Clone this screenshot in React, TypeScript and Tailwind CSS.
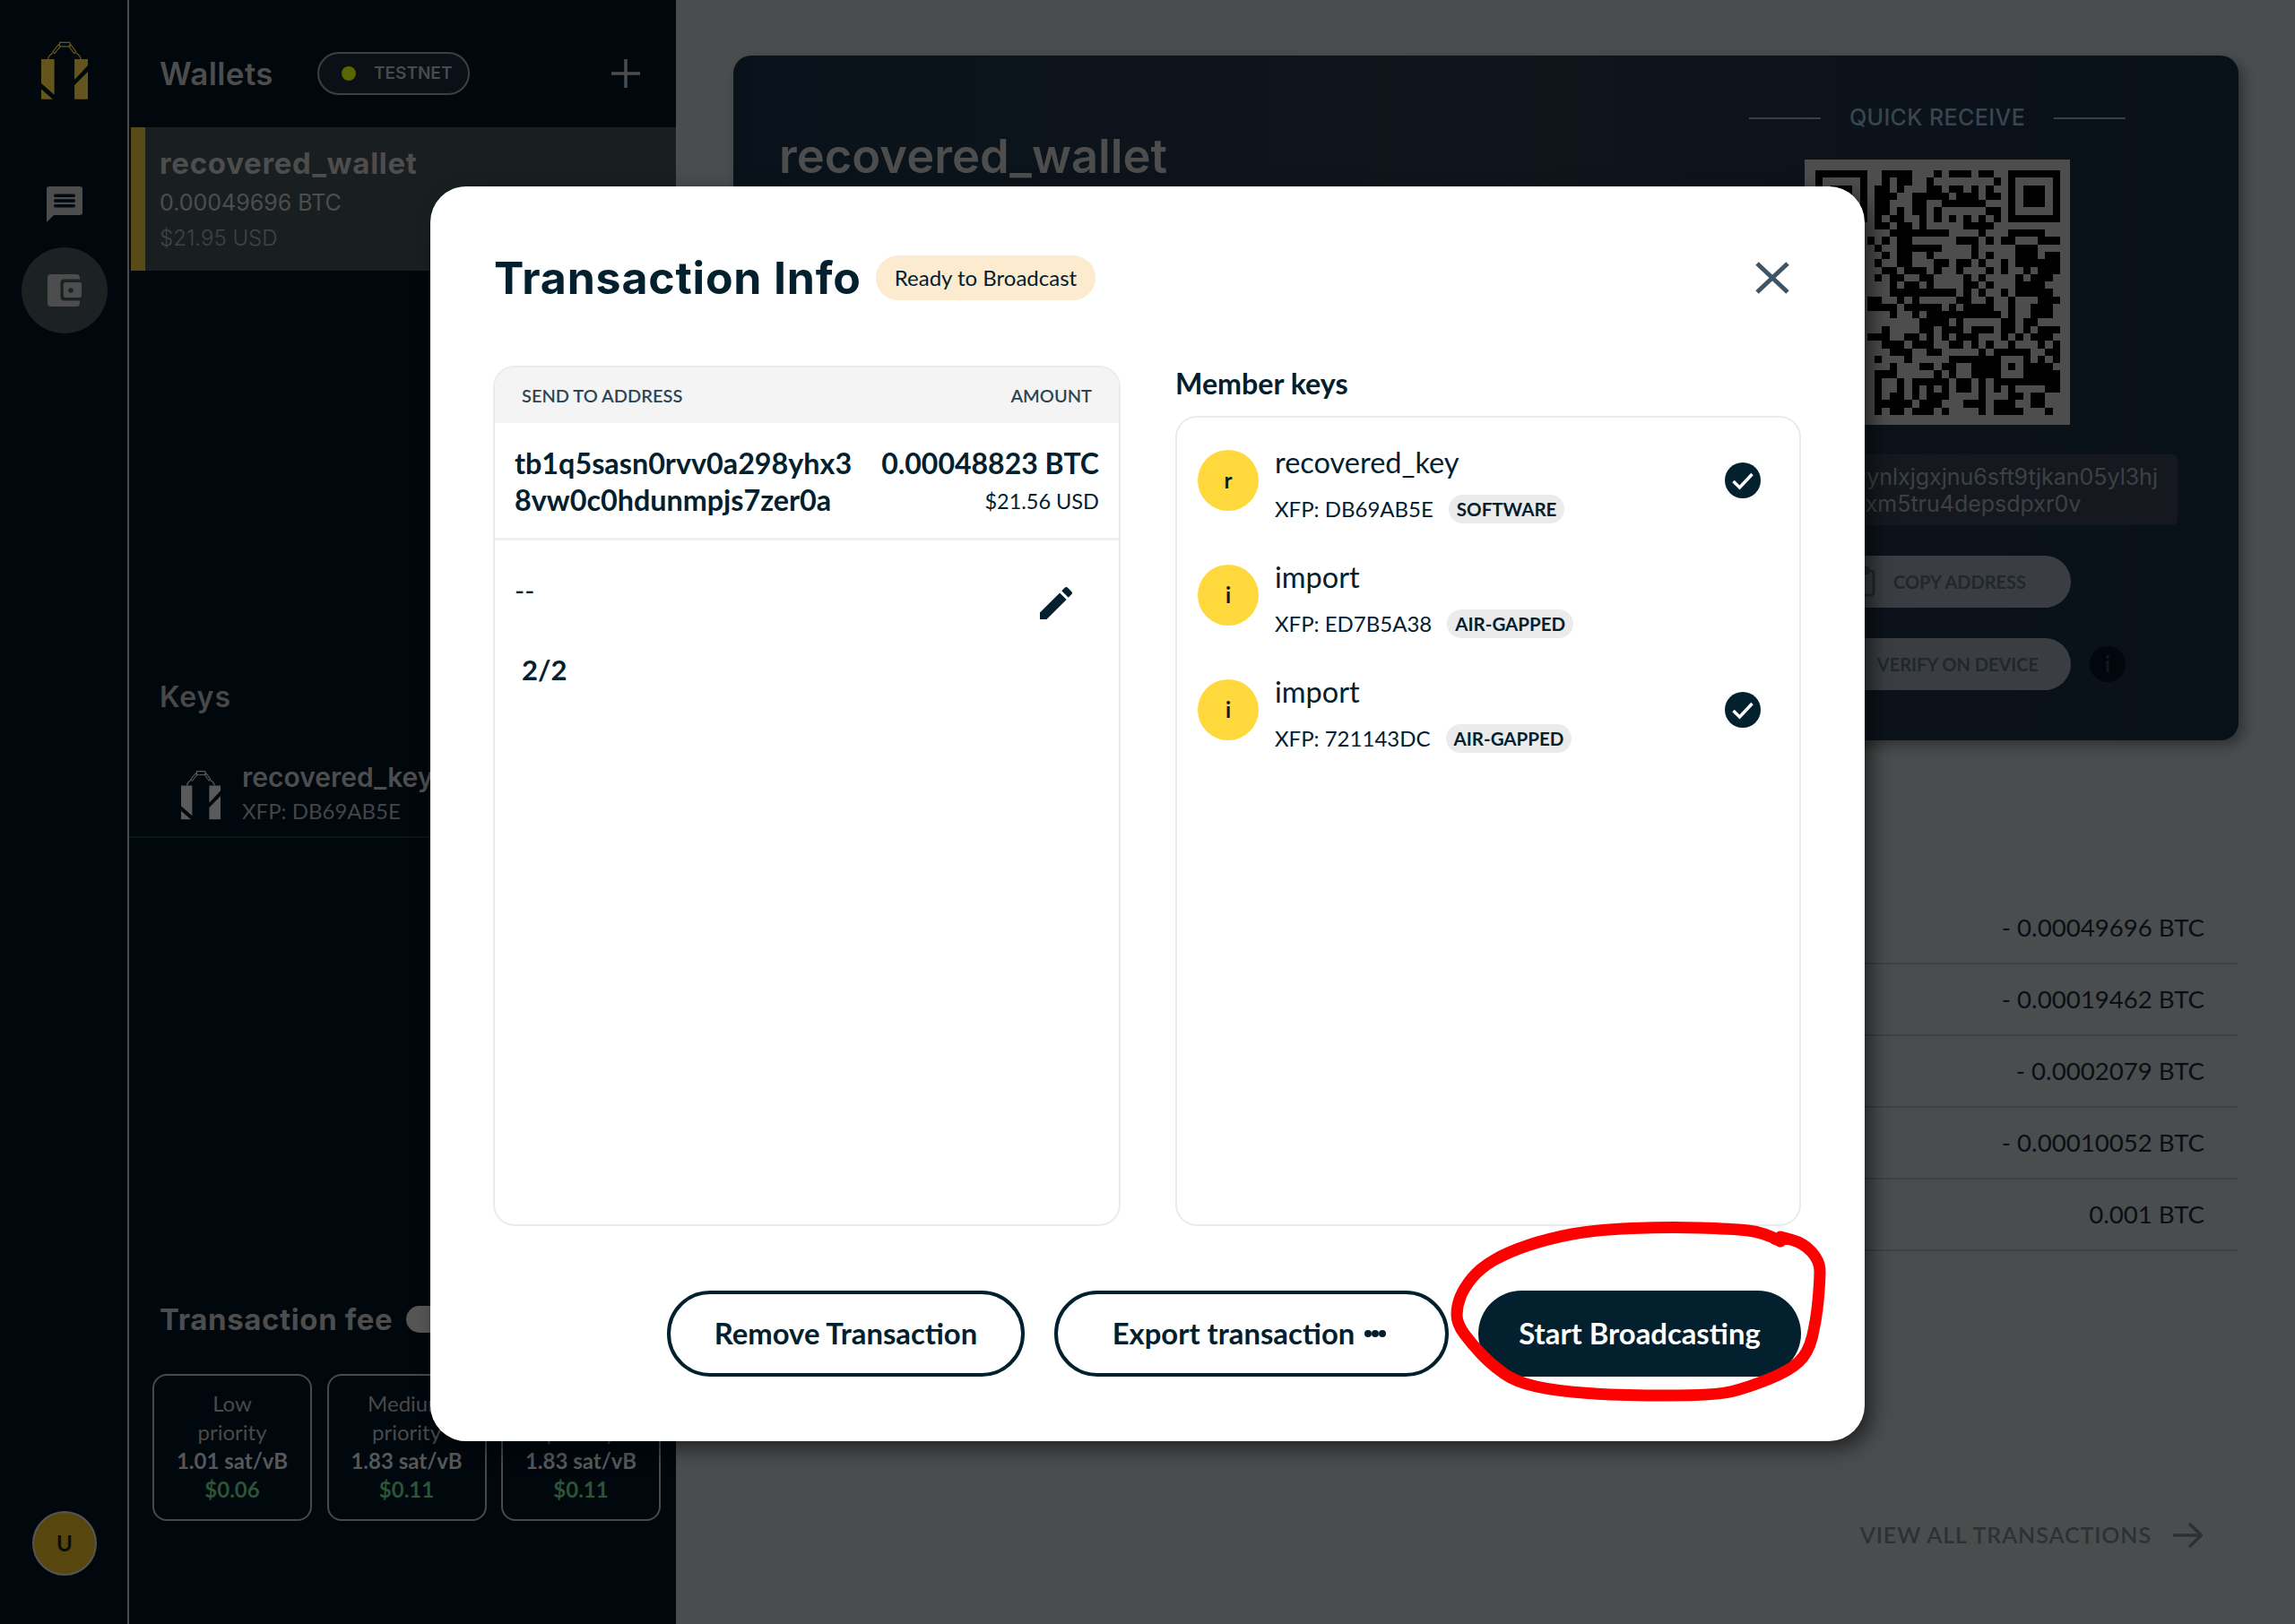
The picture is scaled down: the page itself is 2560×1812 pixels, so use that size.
import React from "react";

const QR_ROWS: string[] = [
  "0-6 9-12 16 18-20 22-23 26-32",
  "0 6 9 11-12 15 24 26 32",
  "0 2-4 6 8-9 11 15-16 18-19 21 23 26 28-30 32",
  "0 2-4 6 8-10 13-17 19-21 23-24 26 28-30 32",
  "0 2-4 6 8-9 13-14 17-22 26 28-30 32",
  "0 6 8-9 11 13-14 16 23-24 26 32",
  "0-6 8 10-11 14 16 18 20 22 24 26-32",
  "8-9 11-12 14 20-23",
  "10-17 22 26-30",
  "7 9 11-12 19-21 23 25-26 30-32",
  "8 11-12 13-16 21 27-29",
  "9 11-12 15 21 23 27-29 31 32",
  "8 11-12 16-17 19-20 22 25 27-32",
  "9-10 12-14 16 19 23 25 28 30-32",
  "8 10-11 14-15 20 22 27 29-31",
  "10 12-13 15 20-21 23 27-30",
  "10-15 16-18 20 22 25 27-31",
  "7-8 11 13 19-20 23 26 30-32",
  "7-10 12-13 14-16 18 20-23 26 29-31",
  "10 13 15-17 18-24 26 29-31",
  "14-17 19 25-26 28-29",
  "9 14-15 17-19 21-23 25-26 28 30-32",
  "7-9 12-13 15 17 19-21 25 27 29-31",
  "9-11 13-15 18-19 21 23 26 30 32",
  "10-12 15-16 22 24-28 31-32",
  "8 12 18-23 24 28 30 32",
  "10 14-15 17-18 21-23 24 26 28-31",
  "8-10 16 18 21-23 24 28-32",
  "8 11 13-17 19-20 22 24-28 29-32",
  "8 11 13 15 17 19-20 22 24 26 31-32",
  "8 10-11 13 15-17 22 26-27 29-30",
  "8-12 14-16 20-22 24-26 29-30",
  "8 10-11 13-15 17 22 24-27 31",
];

function qrRects() {
  const out: React.ReactElement[] = [];
  QR_ROWS.forEach((row, y) => {
    row.split(" ").forEach((part) => {
      const [a, b] = part.split("-").map(Number);
      const end = b === undefined ? a : b;
      out.push(<rect key={`${y}-${a}`} x={a} y={y} width={end - a + 1} height={1} />);
    });
  });
  return out;
}

function Logo({ className, color }: { className: string; color: string }) {
  return (
    <svg viewBox="16 10 52.3 65" className={className}>
      <path d="M16 30H30.7V70L16 57Z M16 63.5 29 75H16Z M53.3 30H68.3V37L53.3 53Z M53.3 59 68.3 44V75H53.3Z" fill={color} />
      <g fill="none" stroke={color} strokeWidth="1.3" strokeLinejoin="round">
        <rect x="36.7" y="11.2" width="11.5" height="4.5" />
        <path d="M35.5 13.5 29 21.5 31 23.5 37.5 15.5Z" />
        <path d="M49 13.5 55 21.5 53 23.5 47 15.5Z" />
        <path d="M29 23C25.5 25 24 27.500 23.500 30" />
        <path d="M55 23C58.500 25 60 27.500 60.500 30" />
      </g>
    </svg>
  );
}

function Chat() {
  return (
    <svg viewBox="0 0 40 40" className="w-[40px] h-[40px]">
      <path d="M3 0H37a3 3 0 0 1 3 3V29a3 3 0 0 1-3 3H8L0 40V3a3 3 0 0 1 3-3Z" fill="#4d4d4d" />
      <rect x="8" y="8.500" width="24" height="3.500" rx="1.700" fill="#00070d" />
      <rect x="8" y="14.300" width="24" height="3.500" rx="1.700" fill="#00070d" />
      <rect x="8" y="20" width="24" height="3.500" rx="1.700" fill="#00070d" />
    </svg>
  );
}

function Wallet() {
  return (
    <svg viewBox="0 0 38 36" className="w-[38px] h-[36px]">
      <rect x="0" y="0" width="36" height="36" rx="4" fill="#4d4d4d" />
      <rect x="14.500" y="5.500" width="23.500" height="24" rx="4" fill="#1c2123" />
      <rect x="17.800" y="9" width="20.200" height="17" rx="2" fill="#4d4d4d" />
      <circle cx="26" cy="18" r="2.800" fill="#1c2123" />
    </svg>
  );
}

function Check() {
  return (
    <svg viewBox="0 0 40 40" className="w-[40px] h-[40px] shrink-0">
      <circle cx="20" cy="20" r="20" fill="#03202e" />
      <path d="M9.500 21 16.500 28 30.500 13" fill="none" stroke="#ffffff" strokeWidth="3.500" />
    </svg>
  );
}

const RED: [number, number][] = [
  [1986, 1385], [1968, 1375], [1932, 1371], [1861, 1369], [1780, 1372], [1727, 1382], [1682, 1397], [1651, 1415],
  [1633, 1437], [1625, 1457], [1625, 1477], [1642, 1500], [1664, 1523], [1691, 1542], [1736, 1552], [1807, 1557],
  [1914, 1557], [1950, 1548], [1995, 1530], [2017, 1510], [2026, 1473], [2030, 1430], [2030, 1407], [2012, 1387], [1986, 1380],
];

function redPath() {
  let d = `M${RED[0][0]} ${RED[0][1]}`;
  for (let i = 1; i < RED.length - 1; i++) {
    const mx = (RED[i][0] + RED[i + 1][0]) / 2;
    const my = (RED[i][1] + RED[i + 1][1]) / 2;
    d += ` Q${RED[i][0]} ${RED[i][1]} ${mx} ${my}`;
  }
  return d + ` L${RED[RED.length - 1][0]} ${RED[RED.length - 1][1]}`;
}

function FeeCard({ a, b, c, d }: { a: string; b: string; c: string; d: string }) {
  return (
    <div className="w-[178px] h-[164px] rounded-[16px] border-2 border-[#474a4c] pt-[15px] text-center text-[24px] leading-[32px] text-[#484a4b]">
      <div>{a}</div>
      <div>{b}</div>
      <div className="font-bold text-[#55585a]">{c}</div>
      <div className="font-bold text-[#2c5436]">{d}</div>
    </div>
  );
}

function Member({ letter, name, xfp, tag, checked }: { letter: string; name: string; xfp: string; tag: string; checked?: boolean }) {
  return (
    <div className="flex items-start h-[88px] pl-[23px] pr-[43px]">
      <div className="mt-[6px] w-[68px] h-[68px] rounded-full bg-[#ffd83b] flex items-center justify-center text-[24px] font-bold text-[#03202e] shrink-0">
        {letter}
      </div>
      <div className="ml-[18px] flex-1">
        <div className="text-[32.500px] leading-[40px] text-[#03202e]">{name}</div>
        <div className="mt-[16px] flex items-center h-[32px] gap-[17px]">
          <span className="text-[24px] text-[#03202e]">{xfp}</span>
          <span className="h-[32px] px-[9px] rounded-full bg-[#ebebeb] flex items-center text-[20.500px] font-bold text-[#03202e]">{tag}</span>
        </div>
      </div>
      {checked && (
        <div className="mt-[20px]">
          <Check />
        </div>
      )}
    </div>
  );
}

const AMOUNTS = ["- 0.00049696 BTC", "- 0.00019462 BTC", "- 0.0002079 BTC", "- 0.00010052 BTC", "0.001 BTC"];

export default function App() {
  return (
    <div className="relative w-[2560px] h-[1812px] flex overflow-hidden bg-[#4a4d4e] font-[Lato,sans-serif]">
      {/* Icon rail */}
      <div className="w-[144px] h-full shrink-0 bg-[#00070d] border-r-2 border-[#4a4d4e] pl-[2px] flex flex-col items-center pt-[46px]">
        <Logo className="w-[52px] h-[65px]" color="#64551d" />
        <div className="mt-[97px]">
          <Chat />
        </div>
        <div className="mt-[28px] w-[96px] h-[96px] rounded-full bg-[#1c2123] flex items-center justify-center">
          <Wallet />
        </div>
        <div className="mt-auto mb-[54px] w-[72px] h-[72px] rounded-full bg-[#57470f] border-2 border-[#555555] flex items-center justify-center text-[24px] font-bold text-[#0c0d08]">
          U
        </div>
      </div>

      {/* Sidebar */}
      <div className="w-[610px] h-full shrink-0 bg-[#00070d] flex flex-col">
        <div className="h-[142px] pt-[22px] pl-[34px] pr-[40px] flex items-center">
          <span className="w-[127px] shrink-0 text-[35px] tracking-[0.4px] font-semibold text-[#4d4d4d] font-[Inter,sans-serif]">Wallets</span>
          <div className="ml-[49px] w-[170px] h-[48px] rounded-full border-2 border-[#3a4046] bg-[#0a1015] flex items-center pl-[25px]">
            <span className="w-[16px] h-[16px] rounded-full bg-[#5a6600]" />
            <span className="ml-[20px] text-[19px] font-semibold text-[#464b50] font-[Inter,sans-serif]">TESTNET</span>
          </div>
          <svg viewBox="0 0 32 32" className="ml-auto w-[32px] h-[32px]">
            <path d="M16 0V32M0 16H32" stroke="#4d4d4d" strokeWidth="3.500" />
          </svg>
        </div>

        <div className="ml-[2px] h-[160px] bg-[#191f21] border-l-[16px] border-[#594b16] pl-[16px] pt-[20px] flex flex-col">
          <div className="text-[33px] tracking-[0.7px] leading-[40px] font-bold text-[#4d4d4d] font-[Inter,sans-serif]">recovered_wallet</div>
          <div className="mt-[4px] text-[25px] leading-[40px] text-[#4d4d4d] font-[Inter,sans-serif]">0.00049696 BTC</div>
          <div className="text-[24px] leading-[40px] text-[#3f4446] font-[Inter,sans-serif] font-light">$21.95 USD</div>
        </div>

        <div className="mt-[456px] pl-[34px] text-[32px] tracking-[1px] leading-[40px] font-semibold text-[#484848] font-[Inter,sans-serif]">Keys</div>
        <div className="pt-[52px] pb-[10px] pl-[58px] flex items-center border-b-2 border-[#0a1318]">
          <Logo className="w-[44px] h-[56px]" color="#5a5a5a" />
          <div className="ml-[24px]">
            <div className="text-[30px] leading-[34px] font-semibold text-[#4d4d4d] font-[Inter,sans-serif]">recovered_key</div>
            <div className="mt-[3px] text-[24px] leading-[36px] text-[#454545]">XFP: DB69AB5E</div>
          </div>
        </div>

        <div className="mt-[517px] pl-[34px] flex items-center">
          <span className="w-[275px] shrink-0 text-[33px] tracking-[0.6px] leading-[40px] font-bold text-[#4d4d4d] font-[Inter,sans-serif]">Transaction fee</span>
          <span className="w-[100px] h-[30px] rounded-full bg-[#555555]" />
        </div>
        <div className="mt-[41px] pl-[26px] flex gap-[16.500px]">
          <FeeCard a="Low" b="priority" c="1.01 sat/vB" d="$0.06" />
          <FeeCard a="Medium" b="priority" c="1.83 sat/vB" d="$0.11" />
          <FeeCard a="High" b="priority" c="1.83 sat/vB" d="$0.11" />
        </div>
      </div>

      {/* Main */}
      <div className="flex-1 pl-[64px] pr-[63px] pt-[62px]">
        <div className="h-[764px] rounded-[20px] flex justify-between bg-[#0c1218] bg-linear-to-r from-[#09121a] via-[#10151c] to-[#081018] shadow-[6px_6px_14px_rgba(0,0,0,0.35)]">
          <div className="pl-[51px] pt-[80px] text-[52.500px] leading-[64px] font-semibold text-[#4d4d4d] font-[Inter,sans-serif]">recovered_wallet</div>
          <div className="w-[672px] shrink-0 flex flex-col items-center pt-[54px]">
            <div className="flex items-center gap-[32px] h-[32px]">
              <span className="w-[80px] h-[2px] bg-[#3a3f44]" />
              <span className="text-[25px] tracking-[0.4px] font-medium text-[#39454f] font-[Inter,sans-serif] whitespace-nowrap">QUICK RECEIVE</span>
              <span className="w-[80px] h-[2px] bg-[#3a3f44]" />
            </div>
            <div className="mt-[30px] w-[296px] h-[296px] bg-[#4d4d4d] flex items-center justify-center">
              <svg viewBox="0 0 33 33" className="w-[273px] h-[273px]" shapeRendering="crispEdges" fill="#000000">
                {qrRects()}
              </svg>
            </div>
            <div className="mt-[33px] w-[536px] h-[79px] rounded-[6px] bg-[#15191f] pt-[10px] text-center text-[25px] leading-[30px] text-[#3d4144] whitespace-nowrap overflow-hidden font-[Inter,sans-serif]">
              <div>tb1q7hc8rfkevynlxjgxjnu6sft9tjkan05yl3hj</div>
              <div>q5aelpxm5tru4depsdpxr0v</div>
            </div>
            <div className="mt-[34px] w-[298px] h-[58px] rounded-full bg-[#3a3e42] flex items-center justify-end gap-[20px] pr-[50px] text-[20px] font-bold text-[#22272c]">
              <svg viewBox="0 0 28 34" className="w-[28px] h-[34px]" fill="none" stroke="#22272c" strokeWidth="3">
                <rect x="2" y="5" width="24" height="27" rx="3" />
                <rect x="8" y="1.500" width="12" height="6" rx="2" />
              </svg>
              COPY ADDRESS
            </div>
            <div className="relative mt-[34px] w-[298px] h-[58px] rounded-full bg-[#3a3e42] flex items-center justify-end pr-[36px] text-[20px] font-bold text-[#22272c]">
              VERIFY ON DEVICE
              <span className="absolute left-[319px] top-[9px] w-[40px] h-[40px] rounded-full bg-[#01070d] flex items-center justify-center text-[24px] font-bold text-[#0e1a22]">i</span>
            </div>
          </div>
        </div>

        <div className="mt-[170px]">
          {AMOUNTS.map((a) => (
            <div key={a} className="h-[80px] border-b-2 border-[#3c4148] flex items-center justify-end pr-[38px] text-[27.600px] text-[#090f14]">
              {a}
            </div>
          ))}
        </div>
        <div className="mt-[297px] h-[40px] pr-[40px] flex items-center justify-end gap-[24px] text-[25px] font-semibold text-[#2d3134]">
          <span className="tracking-[0.9px]">VIEW ALL TRANSACTIONS</span>
          <svg viewBox="0 0 33 30" className="w-[33px] h-[30px]">
            <path d="M0 15H31M18 2 31.500 15 18 28" fill="none" stroke="#2d3134" strokeWidth="3.500" />
          </svg>
        </div>
      </div>

      {/* Modal */}
      <div className="absolute left-[480px] top-[208px] w-[1600px] h-[1400px] rounded-[40px] bg-white shadow-[8px_8px_22px_rgba(0,0,0,0.55)] pl-[70px] pr-[71px] text-[#03202e]">
        <div className="relative pt-[77px] flex items-center">
          <h1 className="ml-[1px] text-[50px] tracking-[0.8px] leading-[50px] font-bold font-[Inter,sans-serif]">Transaction Info</h1>
          <span className="ml-[16px] h-[50px] px-[21px] rounded-full bg-[#fdebd0] flex items-center text-[24px]">Ready to Broadcast</span>
          <svg viewBox="0 0 38 36" className="ml-auto mr-[13px] w-[38px] h-[36px]">
            <path d="M2 2 36 34M36 2 2 34" fill="none" stroke="#3d5566" strokeWidth="5" />
          </svg>
        </div>

        <div className="mt-[73px] flex justify-between h-[960px]">
          <div className="w-[700px] rounded-[24px] border-2 border-[#ebebeb] overflow-hidden">
            <div className="h-[62px] bg-[#f4f4f4] flex items-center justify-between pl-[30px] pr-[30px] text-[20px] font-semibold text-[#2e4554]">
              <span>SEND TO ADDRESS</span>
              <span>AMOUNT</span>
            </div>
            <div className="flex justify-between pt-[24px] pb-[22px] px-[22px] border-b-[3px] border-[#f0f0f0]">
              <div className="text-[32.300px] leading-[41px] font-bold">
                <div>tb1q5sasn0rvv0a298yhx3</div>
                <div>8vw0c0hdunmpjs7zer0a</div>
              </div>
              <div className="text-right">
                <div className="text-[32px] leading-[41px] font-bold">0.00048823 BTC</div>
                <div className="mt-[4px] text-[23.500px] leading-[36px]">$21.56 USD</div>
              </div>
            </div>
            <div className="flex justify-between items-start pl-[22px] pr-[46px]">
              <span className="mt-[37px] text-[30px] leading-[36px]">--</span>
              <svg viewBox="0 0 24 24" className="mt-[46px] w-[48px] h-[48px]" fill="#03202e">
                <path d="M3 17.250V21h3.750L17.810 9.940l-3.750-3.750L3 17.250zM20.710 7.040c.39-.39.39-1.020 0-1.410l-2.340-2.340c-.39-.39-1.020-.39-1.410 0l-1.830 1.830 3.750 3.750 1.830-1.830z" />
              </svg>
            </div>
            <div className="mt-[30px] pl-[30px] text-[31px] leading-[40px] font-bold">2/2</div>
          </div>

          <div className="w-[698px] flex flex-col">
            <div className="text-[32.200px] leading-[40px] font-bold">Member keys</div>
            <div className="mt-[16px] flex-1 rounded-[24px] border-2 border-[#ebebeb] pt-[30px] flex flex-col gap-[40px]">
              <Member letter="r" name="recovered_key" xfp="XFP: DB69AB5E" tag="SOFTWARE" checked />
              <Member letter="i" name="import" xfp="XFP: ED7B5A38" tag="AIR-GAPPED" />
              <Member letter="i" name="import" xfp="XFP: 721143DC" tag="AIR-GAPPED" checked />
            </div>
          </div>
        </div>

        <div className="mt-[72px] flex justify-end items-center">
          <div className="w-[399px] h-[96px] rounded-full border-4 border-[#03202e] flex items-center justify-center text-[32.800px] font-bold">
            Remove Transaction
          </div>
          <div className="ml-[33px] w-[440px] h-[96px] rounded-full border-4 border-[#03202e] flex items-center justify-center gap-[11px] pr-[5px] text-[32.800px] font-bold">
            Export transaction
            <svg viewBox="0 0 24 8" className="w-[24px] h-[8px]" fill="#03202e">
              <circle cx="4" cy="4" r="4" />
              <circle cx="12" cy="4" r="4" />
              <circle cx="20" cy="4" r="4" />
            </svg>
          </div>
          <div className="ml-[33px] w-[360px] h-[96px] rounded-full bg-[#03202e] flex items-center justify-center text-[32.800px] font-bold text-white">
            Start Broadcasting
          </div>
        </div>
      </div>

      {/* Red hand-drawn annotation */}
      <svg viewBox="1600 1350 450 230" className="absolute left-[1600px] top-[1350px] w-[450px] h-[230px] pointer-events-none">
        <path d={redPath()} fill="none" stroke="#ff0000" strokeWidth="13" strokeLinecap="round" strokeLinejoin="round" />
        <path d="M1980 1383H1994" fill="none" stroke="#ff0000" strokeWidth="12" strokeLinecap="round" />
      </svg>
    </div>
  );
}
